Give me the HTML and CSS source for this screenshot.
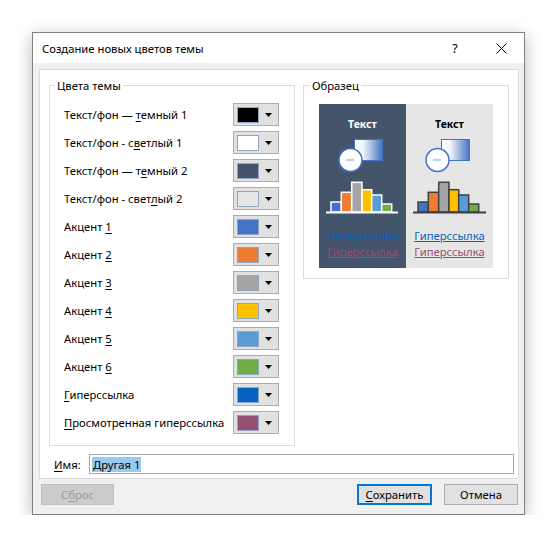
FILE: index.html
```html
<!DOCTYPE html>
<html lang="ru">
<head>
<meta charset="utf-8">
<title>Создание новых цветов темы</title>
<link rel="stylesheet" href="styles.css">
</head>
<body>
<div class="dialog">
  <div class="titlebar">
    <span class="title">Создание новых цветов темы</span>
    <span class="cap-btn help">?</span>
    <span class="cap-btn close"><svg width="11" height="11" viewBox="0 0 11 11"><path d="M0.5 0.5 L10.5 10.5 M10.5 0.5 L0.5 10.5" stroke="#000" stroke-width="1" fill="none"/></svg></span>
  </div>
  <div class="main">
    <div class="panel">
      <div class="groups">
        <fieldset class="group group-colors">
          <legend>Цвета темы</legend>
          <div class="rows">
            <div class="row"><span class="label">Текст/фон — <u>т</u>емный 1</span><span class="picker"><span class="swatch c-dk1"></span><svg class="arrow" width="7" height="4" viewBox="0 0 7 4"><path d="M0 0H7L3.5 4Z" fill="#000"/></svg></span></div>
            <div class="row"><span class="label">Текст/фон - с<u>в</u>етлый 1</span><span class="picker"><span class="swatch c-lt1"></span><svg class="arrow" width="7" height="4" viewBox="0 0 7 4"><path d="M0 0H7L3.5 4Z" fill="#000"/></svg></span></div>
            <div class="row"><span class="label">Текст/фон — т<u>е</u>мный 2</span><span class="picker"><span class="swatch c-dk2"></span><svg class="arrow" width="7" height="4" viewBox="0 0 7 4"><path d="M0 0H7L3.5 4Z" fill="#000"/></svg></span></div>
            <div class="row"><span class="label">Текст/фон - свет<u>л</u>ый 2</span><span class="picker"><span class="swatch c-lt2"></span><svg class="arrow" width="7" height="4" viewBox="0 0 7 4"><path d="M0 0H7L3.5 4Z" fill="#000"/></svg></span></div>
            <div class="row"><span class="label">Акцент <u>1</u></span><span class="picker"><span class="swatch c-a1"></span><svg class="arrow" width="7" height="4" viewBox="0 0 7 4"><path d="M0 0H7L3.5 4Z" fill="#000"/></svg></span></div>
            <div class="row"><span class="label">Акцент <u>2</u></span><span class="picker"><span class="swatch c-a2"></span><svg class="arrow" width="7" height="4" viewBox="0 0 7 4"><path d="M0 0H7L3.5 4Z" fill="#000"/></svg></span></div>
            <div class="row"><span class="label">Акцент <u>3</u></span><span class="picker"><span class="swatch c-a3"></span><svg class="arrow" width="7" height="4" viewBox="0 0 7 4"><path d="M0 0H7L3.5 4Z" fill="#000"/></svg></span></div>
            <div class="row"><span class="label">Акцент <u>4</u></span><span class="picker"><span class="swatch c-a4"></span><svg class="arrow" width="7" height="4" viewBox="0 0 7 4"><path d="M0 0H7L3.5 4Z" fill="#000"/></svg></span></div>
            <div class="row"><span class="label">Акцент <u>5</u></span><span class="picker"><span class="swatch c-a5"></span><svg class="arrow" width="7" height="4" viewBox="0 0 7 4"><path d="M0 0H7L3.5 4Z" fill="#000"/></svg></span></div>
            <div class="row"><span class="label">Акцент <u>6</u></span><span class="picker"><span class="swatch c-a6"></span><svg class="arrow" width="7" height="4" viewBox="0 0 7 4"><path d="M0 0H7L3.5 4Z" fill="#000"/></svg></span></div>
            <div class="row"><span class="label"><u>Г</u>иперссылка</span><span class="picker"><span class="swatch c-hl"></span><svg class="arrow" width="7" height="4" viewBox="0 0 7 4"><path d="M0 0H7L3.5 4Z" fill="#000"/></svg></span></div>
            <div class="row"><span class="label"><u>П</u>росмотренная гиперссылка</span><span class="picker"><span class="swatch c-fhl"></span><svg class="arrow" width="7" height="4" viewBox="0 0 7 4"><path d="M0 0H7L3.5 4Z" fill="#000"/></svg></span></div>
          </div>
        </fieldset>
        <fieldset class="group group-sample">
          <legend>Образец</legend>
          <div class="sample">
            <div class="half dark">
              <div class="sample-title">Текст</div>
              <svg class="art" width="87" height="82" viewBox="0 0 87 82">
                <defs>
                  <linearGradient id="gd" x1="0" y1="0" x2="1" y2="0">
                    <stop offset="0" stop-color="#ffffff"/>
                    <stop offset="0.3" stop-color="#f4f6fb"/>
                    <stop offset="1" stop-color="#4472c4"/>
                  </linearGradient>
                </defs>
                <rect x="35.5" y="5.5" width="28" height="21" fill="url(#gd)" stroke="#4472c4" stroke-width="1"/>
                <circle cx="31.5" cy="26" r="11.5" fill="#fff" stroke="#4472c4" stroke-width="1.5"/>
                <path d="M27 26.5 l1 -1 l1 1 l1 -1 l1 1 l1 -1 l1 1 l1 -1 l1 1" stroke="#4472c4" stroke-width="0.8" fill="none"/>
                <g stroke="#fff" stroke-width="1.5">
                  <rect x="12" y="68" width="10.3" height="10" fill="#4472c4"/>
                  <rect x="22.3" y="58.3" width="10.4" height="19.7" fill="#ed7d31"/>
                  <rect x="32.7" y="48.3" width="10.3" height="29.7" fill="#a5a5a5"/>
                  <rect x="43" y="55.7" width="9.7" height="22.3" fill="#ffc000"/>
                  <rect x="52.7" y="61" width="10" height="17" fill="#5b9bd5"/>
                  <rect x="62.7" y="70" width="10" height="8" fill="#70ad47"/>
                </g>
                <line x1="7" y1="78.5" x2="79" y2="78.5" stroke="#fff" stroke-width="2"/>
              </svg>
              <div class="links">
                <span class="link l-hl">Гиперссылка</span>
                <span class="link l-fhl">Гиперссылка</span>
              </div>
            </div>
            <div class="half light">
              <div class="sample-title">Текст</div>
              <svg class="art" width="87" height="82" viewBox="0 0 87 82">
                <defs>
                  <linearGradient id="gl" x1="0" y1="0" x2="1" y2="0">
                    <stop offset="0" stop-color="#ffffff"/>
                    <stop offset="0.3" stop-color="#f4f6fb"/>
                    <stop offset="1" stop-color="#4472c4"/>
                  </linearGradient>
                </defs>
                <rect x="35.5" y="5.5" width="28" height="21" fill="url(#gl)" stroke="#4472c4" stroke-width="1"/>
                <circle cx="31.5" cy="26" r="11.5" fill="#fff" stroke="#4472c4" stroke-width="1.5"/>
                <path d="M27 26.5 l1 -1 l1 1 l1 -1 l1 1 l1 -1 l1 1 l1 -1 l1 1" stroke="#4472c4" stroke-width="0.8" fill="none"/>
                <g stroke="#404040" stroke-width="1.5">
                  <rect x="12" y="68" width="10.3" height="10" fill="#4472c4"/>
                  <rect x="22.3" y="58.3" width="10.4" height="19.7" fill="#ed7d31"/>
                  <rect x="32.7" y="48.3" width="10.3" height="29.7" fill="#a5a5a5"/>
                  <rect x="43" y="55.7" width="9.7" height="22.3" fill="#ffc000"/>
                  <rect x="52.7" y="61" width="10" height="17" fill="#5b9bd5"/>
                  <rect x="62.7" y="70" width="10" height="8" fill="#70ad47"/>
                </g>
                <line x1="7" y1="78.5" x2="80" y2="78.5" stroke="#404040" stroke-width="2"/>
              </svg>
              <div class="links">
                <span class="link l-hl">Гиперссылка</span>
                <span class="link l-fhl">Гиперссылка</span>
              </div>
            </div>
          </div>
        </fieldset>
      </div>
      <div class="name-row">
        <span class="name-label"><u>И</u>мя:</span>
        <div class="input"><span class="sel">Другая 1</span></div>
      </div>
    </div>
    <div class="footer">
      <span class="btn btn-reset disabled">С<u>б</u>рос</span>
      <span class="spacer"></span>
      <span class="btn btn-save"><u>С</u>охранить</span>
      <span class="btn btn-cancel">Отмена</span>
    </div>
  </div>
</div>
</body>
</html>
```

FILE: styles.css
```css
* { box-sizing: border-box; }
html, body { margin: 0; background: #fff; }
body {
  padding: 32px 0 0 32px;
  font-family: "Noto Sans", "Segoe UI", sans-serif;
  font-size: 11.25px;
  color: #000;
}
u { text-decoration: underline; text-underline-offset: 2px; }

.dialog {
  width: 493px;
  height: 483px;
  border: 1px solid #808080;
  background: #f0f0f0;
  box-shadow: 0 4px 16px rgba(0,0,0,.28);
  display: flex;
  flex-direction: column;
}
.titlebar {
  height: 30px;
  flex: none;
  background: #fff;
  display: flex;
  align-items: center;
  padding-left: 9px;
}
.title { flex: 1; }
.cap-btn {
  width: 46px;
  height: 30px;
  display: flex;
  align-items: center;
  justify-content: center;
}
.help { font-size: 12.5px; }

.main { padding: 6px 5px 0 6px; }
.panel {
  background: #fff;
  border: 1px solid #dadada;
  padding: 7px 9px 4px 9px;
}
.groups {
  display: flex;
  align-items: flex-start;
  gap: 8px;
  margin-bottom: 8px;
}
.group {
  margin: 0;
  border: 1px solid #dcdcdc;
  min-width: 0;
}
.group legend {
  padding: 0 2px;
  margin-left: -9px;
  line-height: 17px;
}
.group-colors {
  width: 246px;
  padding: 9px 15px 11px 14px;
}
.rows {
  display: flex;
  flex-direction: column;
  gap: 5px;
}
.row {
  height: 23px;
  display: flex;
  align-items: center;
  justify-content: space-between;
}
.label { white-space: nowrap; }
.picker {
  width: 46px;
  height: 23px;
  border: 1px solid #adadad;
  background: #e1e1e1;
  padding-left: 3px;
  display: flex;
  align-items: center;
  flex: none;
}
.swatch {
  display: block;
  width: 22px;
  height: 16px;
  border: 1px solid #8ca6c4;
}
.arrow { display: block; margin-left: 6px; }

.c-dk1 { background: #000000; }
.c-lt1 { background: #ffffff; }
.c-dk2 { background: #44546a; }
.c-lt2 { background: #e7e6e6; }
.c-a1 { background: #4472c4; }
.c-a2 { background: #ed7d31; }
.c-a3 { background: #a5a5a5; }
.c-a4 { background: #ffc000; }
.c-a5 { background: #5b9bd5; }
.c-a6 { background: #70ad47; }
.c-hl { background: #0563c1; }
.c-fhl { background: #954f72; }

.group-sample {
  width: 206px;
  padding: 10px 14px 10px 15px;
}
.sample { display: flex; height: 164px; }
.half {
  width: 87px;
  display: flex;
  flex-direction: column;
  align-items: center;
}
.dark { background: #44546a; color: #fff; }
.light { background: #e7e6e6; color: #000; }
.sample-title {
  font-weight: bold;
  font-size: 10.5px;
  line-height: 14px;
  margin-top: 13px;
}
.art { display: block; margin-top: 3px; }
.links {
  margin-top: 12px;
  display: flex;
  flex-direction: column;
  align-items: center;
  line-height: 16px;
}
.link { text-decoration: underline; }
.l-hl { color: #0563c1; }
.l-fhl { color: #954f72; }

.name-row {
  display: flex;
  align-items: center;
  margin: 0 -9px;
  padding: 0 4px 0 14px;
}
.name-label { width: 35px; flex: none; }
.input {
  flex: 1;
  height: 20px;
  border: 1px solid #a9a9a9;
  background: #fff;
  display: flex;
  align-items: center;
  padding-left: 2px;
}
.sel { background: #99c9ef; line-height: 15px; padding: 0 1px; }

.footer {
  display: flex;
  align-items: center;
  padding: 5px 1px 0 2px;
  gap: 12px;
}
.spacer { flex: 1; }
.btn {
  height: 21px;
  border: 1px solid #adadad;
  background: #e1e1e1;
  display: flex;
  align-items: center;
  justify-content: center;
}
.btn-reset { width: 73px; }
.btn-save { width: 75px; border: 2px solid #0078d7; }
.btn-cancel { width: 74px; }
.disabled { background: #cccccc; border-color: #bfbfbf; color: #9a9a9a; }
```
